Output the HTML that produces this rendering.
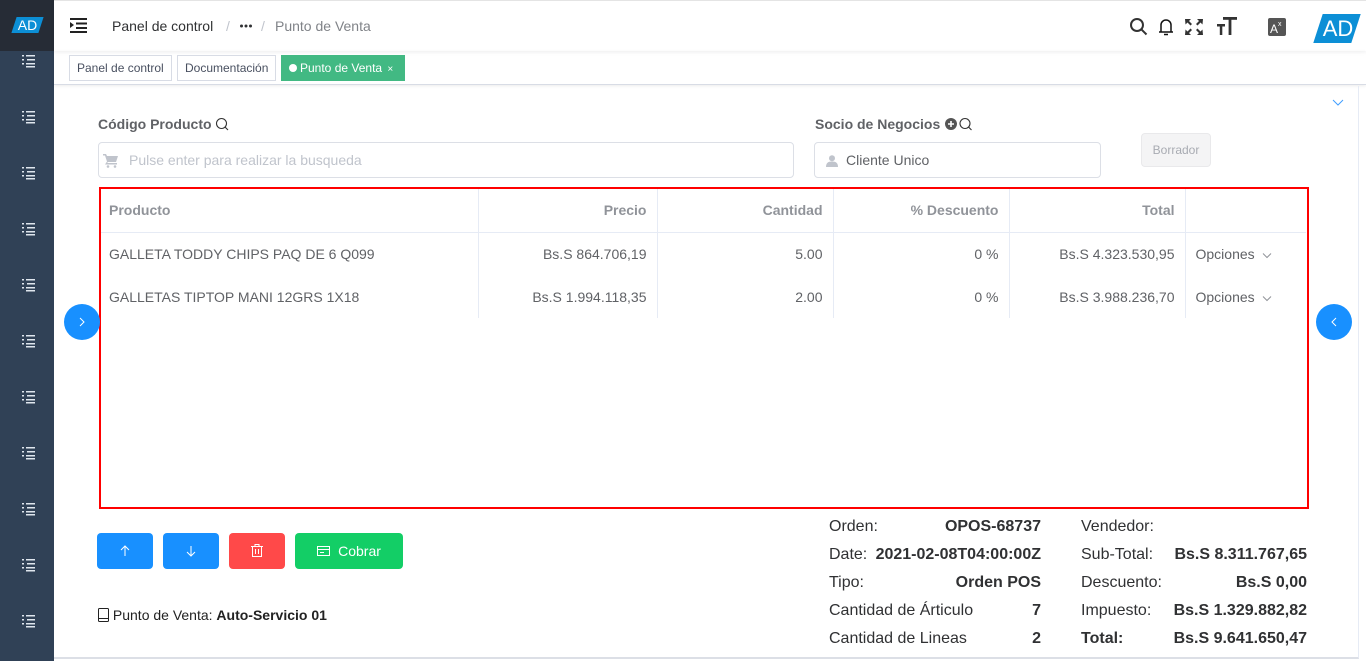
<!DOCTYPE html>
<html><head><meta charset="utf-8"><style>
*{box-sizing:border-box;margin:0;padding:0}
body{width:1366px;height:661px;overflow:hidden;font-family:"Liberation Sans",sans-serif;background:#fff;position:relative;color:#606266}
.side{position:absolute;left:0;top:0;width:54px;height:661px;background:#304156}
.logo{position:absolute;left:0;top:0;width:54px;height:51px;background:#262c36}
.lg{position:absolute;left:14px;top:17px;width:27px;height:16px;background:#0c8fd6;transform:skewX(-18deg)}
.lgt{position:absolute;left:13px;top:16px;width:29px;text-align:center;color:#fff;font-size:14px;line-height:18px}
.hdr{position:absolute;left:54px;top:0;right:0;height:51px;background:#fff;box-shadow:0 1px 4px rgba(0,21,41,.08);border-top:1px solid #e4e4e4}
.abs{position:absolute}
.tags{position:absolute;left:54px;top:51px;right:0;height:34px;border-bottom:1px solid #d8dce5;box-shadow:0 1px 3px rgba(0,0,0,.08)}
.tag{position:absolute;top:4px;height:26px;border:1px solid #d8dce5;font-size:12px;line-height:24px;padding:0 7px;color:#495060;background:#fff;white-space:nowrap}
.card{position:absolute;left:54px;top:86px;width:1305px;height:573px;border-right:1px solid #e6ebf5;border-bottom:2px solid #dcdfe6}
.lbl{position:absolute;font-size:14px;font-weight:bold;color:#606266}
.inp{position:absolute;height:36px;border:1px solid #dcdfe6;border-radius:4px;font-size:14px;line-height:34px}
table{position:absolute;left:101px;top:189px;width:1205px;border-collapse:collapse;font-size:14px}
th,td{height:43px;padding:0 10px 0 8px;border-right:1px solid #e6ebf5;text-align:right;color:#606266}
th{color:#909399;font-weight:bold;height:43px;border-bottom:1px solid #e6ebf5}
th:first-child,td:first-child{text-align:left}
th:last-child,td:last-child{border-right:none;text-align:left;padding-left:10px}
.red{position:absolute;left:99px;top:187px;width:1210px;height:322px;border:2px solid #f00}
.circ{position:absolute;width:36px;height:36px;border-radius:50%;background:#1890ff}
.btn{position:absolute;top:533px;height:36px;border-radius:4px;color:#fff;font-size:14px;text-align:center;line-height:36px}
.sm{position:absolute;font-size:16px;color:#303133;line-height:28px}
.b{font-weight:bold}
</style></head><body>
<div class="side">
<div class="logo"><div class="lg"></div><div class="lgt">AD</div></div>
<svg width="54" height="661" style="position:absolute;left:0;top:0" fill="#dfe6ee">
<g id="ic"><rect x="22" y="55" width="2" height="1.5"/><rect x="26" y="55" width="9" height="1.5"/><rect x="22" y="59" width="2" height="1.5"/><rect x="27" y="59" width="8" height="1.5"/><rect x="22" y="63" width="2" height="1.5"/><rect x="26" y="63" width="9" height="1.5"/><rect x="26" y="66" width="9" height="1.5"/></g>
<use href="#ic" y="56"/><use href="#ic" y="112"/><use href="#ic" y="168"/><use href="#ic" y="224"/><use href="#ic" y="280"/><use href="#ic" y="336"/><use href="#ic" y="392"/><use href="#ic" y="448"/><use href="#ic" y="504"/><use href="#ic" y="560"/>
</svg>
</div>
<div class="hdr">
<svg class="abs" style="left:16px;top:17px" width="18" height="15" fill="#222"><rect x="0" y="0" width="17" height="2"/><rect x="6" y="4.5" width="11" height="2"/><rect x="6" y="9" width="11" height="2"/><rect x="0" y="13" width="17" height="2"/><path d="M0 4l4 3-4 3z"/></svg>
<div class="abs" style="left:58px;top:17px;font-size:14px;color:#303133">Panel de control</div>
<div class="abs" style="left:172px;top:17px;font-size:14px;color:#c0c4cc">/</div>
<svg class="abs" style="left:186px;top:23px" width="12" height="4" fill="#303133"><circle cx="1.5" cy="2" r="1.5"/><circle cx="6" cy="2" r="1.5"/><circle cx="10.5" cy="2" r="1.5"/></svg>
<div class="abs" style="left:207px;top:17px;font-size:14px;color:#c0c4cc">/</div>
<div class="abs" style="left:221px;top:17px;font-size:14px;color:#808388">Punto de Venta</div>
<svg class="abs" style="left:1075px;top:16px" width="20" height="20" fill="none" stroke="#333" stroke-width="2"><circle cx="8" cy="8" r="6"/><path d="M12.5 12.5l5 5"/></svg>
<svg class="abs" style="left:1103px;top:16px" width="18" height="20" fill="none" stroke="#111" stroke-width="1.5"><path d="M4 15V8a5 5 0 0110 0v7M2 15h14M7 17.5h4"/></svg>
<svg class="abs" style="left:1130px;top:17px" width="20" height="18" fill="#333"><path d="M1 1h6l-2 2 3 3-1.5 1.5-3-3-2 2zM19 1h-6l2 2-3 3 1.5 1.5 3-3 2 2zM1 17h6l-2-2 3-3-1.5-1.5-3 3-2-2zM19 17h-6l2-2-3-3 1.5-1.5 3 3 2-2z"/></svg>
<svg class="abs" style="left:1163px;top:16px" width="20" height="20" fill="#333"><rect x="0" y="7" width="8" height="2.5"/><rect x="2.8" y="7" width="2.5" height="11"/><rect x="6" y="0" width="14" height="2.8"/><rect x="11.6" y="0" width="2.8" height="18"/></svg>
<svg class="abs" style="left:1214px;top:17px" width="18" height="18"><rect width="18" height="18" rx="2" fill="#555"/><text x="2" y="15" font-size="12" fill="#fff" font-family="Liberation Sans">A</text><text x="10" y="8" font-size="7" fill="#fff" font-family="Liberation Sans">x</text></svg>
<div class="abs" style="left:1264px;top:13px;width:38px;height:29px;background:#0c8fd6;transform:skewX(-18deg)"></div>
<div class="abs" style="left:1262px;top:13px;width:44px;text-align:center;color:#fff;font-size:22px;line-height:29px">AD</div>
</div>
<div class="tags">
<div class="tag" style="left:15px">Panel de control</div>
<div class="tag" style="left:123px">Documentación</div>
<div class="tag" style="left:227px;width:124px;background:#42b983;border-color:#42b983;color:#fff;padding-left:7px"><span style="display:inline-block;width:8px;height:8px;border-radius:50%;background:#fff;margin-right:3px"></span>Punto de Venta <span style="font-size:10px;margin-left:2px">×</span></div>
</div>
<div class="card"></div>
<svg class="abs" style="left:1332px;top:99px" width="12" height="8" fill="none" stroke="#409eff" stroke-width="1"><path d="M1 1l5 5 5-5"/></svg>
<div class="lbl" style="left:98px;top:116px">Código Producto <svg width="14" height="14" style="vertical-align:-2px" fill="none" stroke="#333" stroke-width="1.1"><circle cx="6.5" cy="6.5" r="5"/><path d="M10 10l3 3"/></svg></div>
<div class="inp" style="left:98px;top:142px;width:696px;color:#c0c4cc"><svg width="16" height="14" style="position:absolute;left:4px;top:11px" fill="#c0c4cc"><path d="M0 0h3l1 2h11l-2 6H5l-1 1h10v1.5H2l2-3L2 1.5H0z"/><circle cx="5" cy="12.5" r="1.3"/><circle cx="12" cy="12.5" r="1.3"/></svg><span style="position:absolute;left:30px">Pulse enter para realizar la busqueda</span></div>
<div class="lbl" style="left:815px;top:116px">Socio de Negocios <svg width="30" height="14" style="vertical-align:-2px"><circle cx="7" cy="7" r="6" fill="#555"/><path d="M7 4v6M4 7h6" stroke="#fff" stroke-width="1.6"/><circle cx="21" cy="6.5" r="5" fill="none" stroke="#333" stroke-width="1.1"/><path d="M24.5 10l3 3" stroke="#333" stroke-width="1.1"/></svg></div>
<div class="inp" style="left:814px;top:142px;width:287px;color:#606266"><svg width="12" height="12" style="position:absolute;left:11px;top:12px" fill="#c0c4cc"><circle cx="6" cy="3.2" r="3"/><path d="M0 12c0-4 2-5.5 6-5.5s6 1.5 6 5.5z"/></svg><span style="position:absolute;left:31px">Cliente Unico</span></div>
<div class="abs" style="left:1141px;top:133px;width:70px;height:34px;background:#f4f4f5;border:1px solid #e9e9eb;border-radius:4px;color:#a8abb2;font-size:12px;text-align:center;line-height:32px">Borrador</div>
<table>
<tr><th style="width:377px">Producto</th><th style="width:179px">Precio</th><th style="width:176px">Cantidad</th><th style="width:176px">% Descuento</th><th style="width:176px">Total</th><th></th></tr>
<tr><td>GALLETA TODDY CHIPS PAQ DE 6 Q099</td><td>Bs.S 864.706,19</td><td>5.00</td><td>0 %</td><td>Bs.S 4.323.530,95</td><td>Opciones &nbsp;<svg width="10" height="6" fill="none" stroke="#909399"><path d="M1 .5l4 4 4-4"/></svg></td></tr>
<tr><td>GALLETAS TIPTOP MANI 12GRS 1X18</td><td>Bs.S 1.994.118,35</td><td>2.00</td><td>0 %</td><td>Bs.S 3.988.236,70</td><td>Opciones &nbsp;<svg width="10" height="6" fill="none" stroke="#909399"><path d="M1 .5l4 4 4-4"/></svg></td></tr>
</table>
<div class="red"></div>
<div class="circ" style="left:64px;top:304px"><svg width="36" height="36" fill="none" stroke="#fff"><path d="M16 14l4 4-4 4"/></svg></div>
<div class="circ" style="left:1316px;top:304px"><svg width="36" height="36" fill="none" stroke="#fff"><path d="M20 14l-4 4 4 4"/></svg></div>
<div class="btn" style="left:97px;width:56px;background:#1890ff"><svg width="12" height="12" fill="none" stroke="#fff" style="vertical-align:-1px"><path d="M6 11V1M2 5l4-4 4 4"/></svg></div>
<div class="btn" style="left:163px;width:56px;background:#1890ff"><svg width="12" height="12" fill="none" stroke="#fff" style="vertical-align:-1px"><path d="M6 1v10M2 7l4 4 4-4"/></svg></div>
<div class="btn" style="left:229px;width:56px;background:#ff4949"><svg width="12" height="13" fill="none" stroke="#fff" style="vertical-align:-1px"><path d="M0 2.5h12M4 2.5V.5h4v2M1.5 2.5v10h9v-10M4.5 5v5M7.5 5v5"/></svg></div>
<div class="btn" style="left:295px;width:108px;background:#13ce66"><svg width="13" height="10" fill="none" stroke="#fff" style="vertical-align:0;margin-right:8px"><rect x=".5" y=".5" width="12" height="9"/><path d="M.5 3.5h12M3 6.5h4"/></svg>Cobrar</div>
<div class="abs" style="left:98px;top:607px;font-size:14px;color:#222"><svg width="11" height="14" fill="none" stroke="#222" style="vertical-align:-2px"><rect x=".5" y=".5" width="10" height="13" rx="1"/><path d="M.5 10.5h10"/></svg> Punto de Venta: <b>Auto-Servicio 01</b></div>
<div class="sm" style="left:829px;top:513px">Orden:<br>Date:<br>Tipo:<br>Cantidad de Árticulo<br>Cantidad de Lineas</div>
<div class="sm b" style="left:840px;top:513px;width:201px;text-align:right">OPOS-68737<br>2021-02-08T04:00:00Z<br>Orden POS<br>7<br>2</div>
<div class="sm" style="left:1081px;top:513px">Vendedor:<br>Sub-Total:<br>Descuento:<br>Impuesto:<br><b>Total:</b></div>
<div class="sm b" style="left:1150px;top:513px;width:157px;text-align:right">&nbsp;<br>Bs.S 8.311.767,65<br>Bs.S 0,00<br>Bs.S 1.329.882,82<br>Bs.S 9.641.650,47</div>
</body></html>
